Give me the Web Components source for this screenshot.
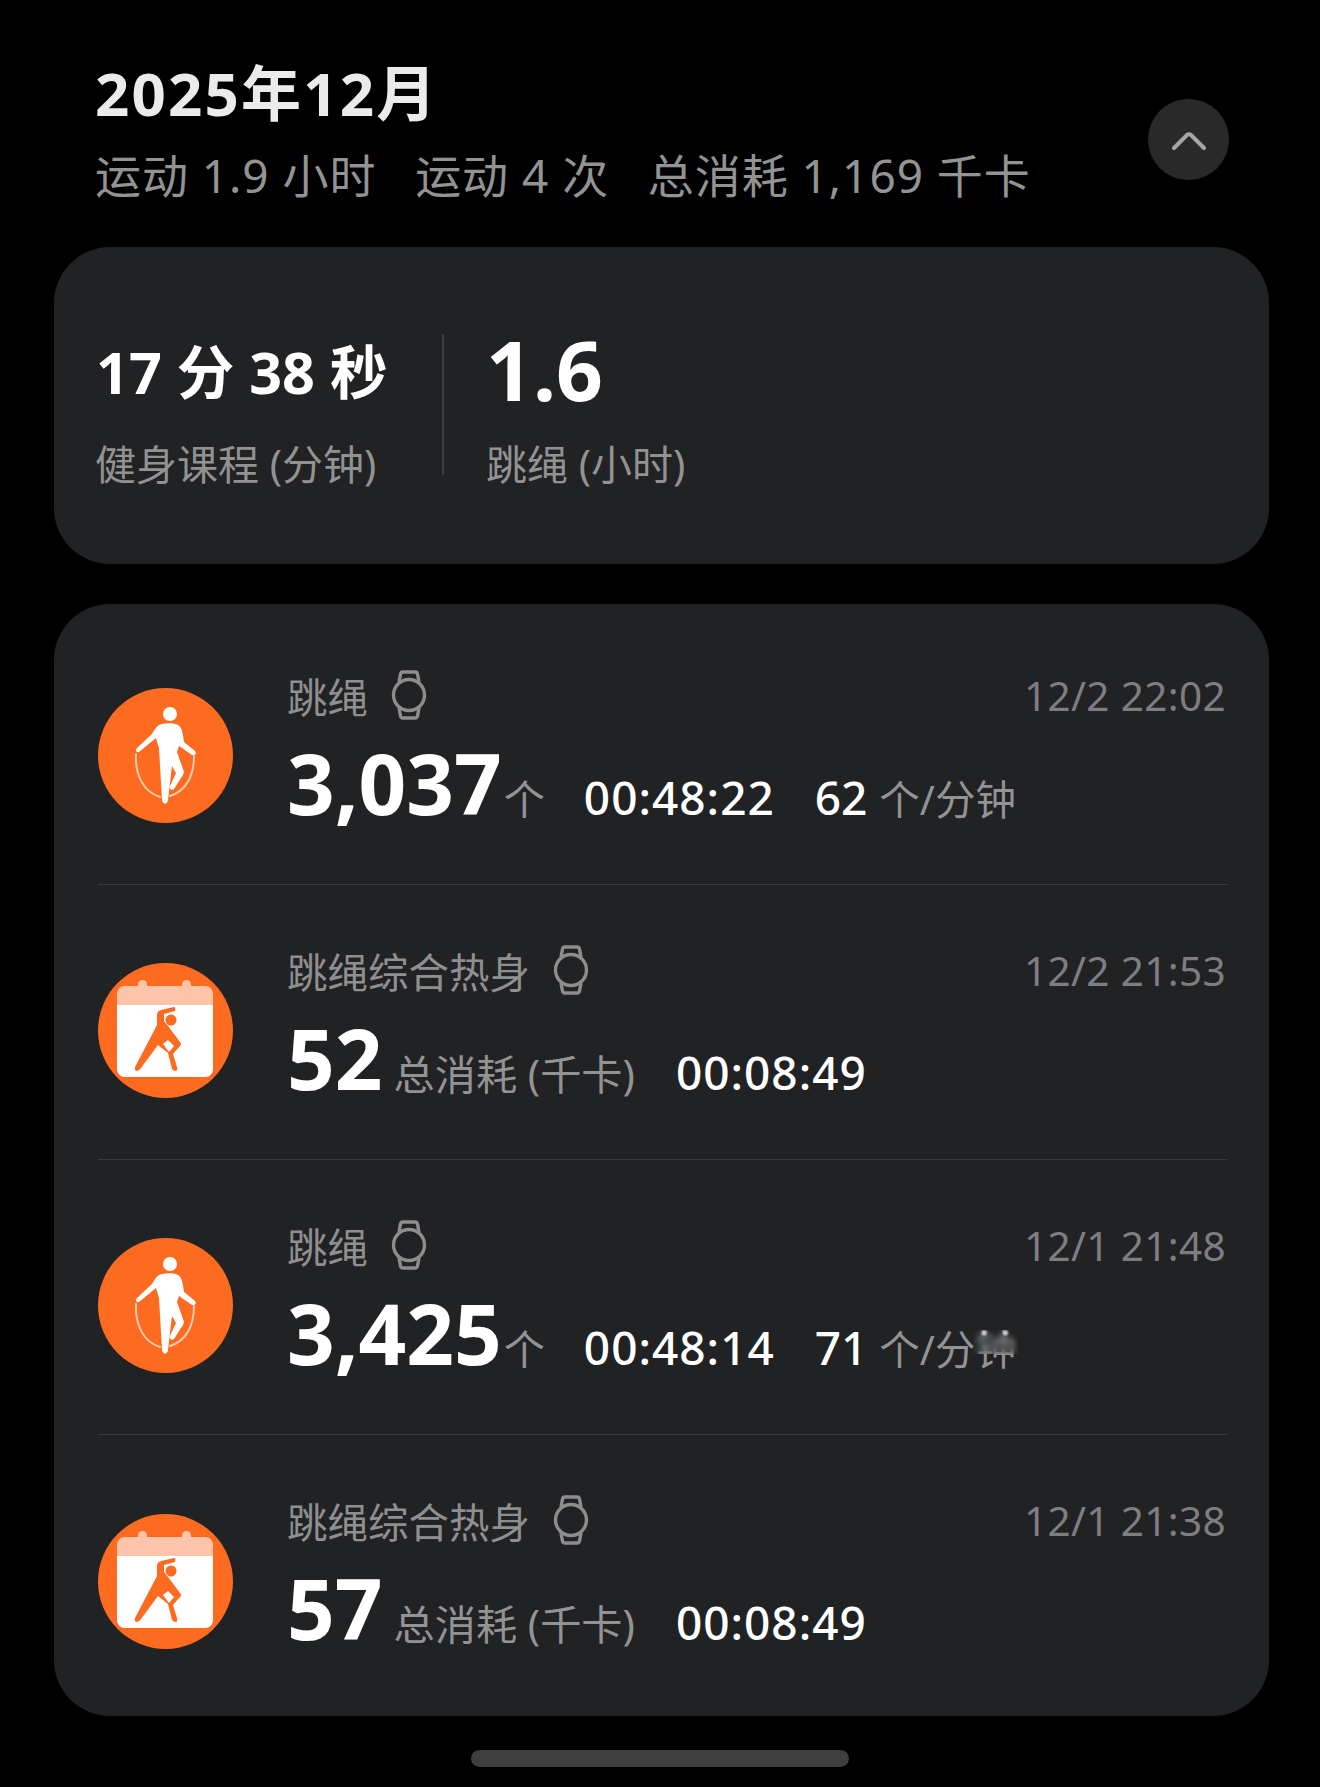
<!DOCTYPE html>
<html lang="zh">
<head>
<meta charset="utf-8">
<title>运动记录</title>
<style>
  html, body { margin: 0; background: #000; }
  body { font-family: "Noto Sans", "Noto Sans CJK SC", sans-serif; color: #fff; width: 1320px; height: 1787px; overflow: hidden; }
</style>
</head>
<body>
<template id="rope-tpl">
  <style>:host { display: block; width: 135px; height: 135px; } svg { display: block; }</style>
  <svg viewBox="0 0 135 135" width="135" height="135">
    <circle cx="67.5" cy="67.5" r="67.5" fill="#fd6b21"/>
    <path d="M38 66C37 88 46 104 62 109M96 68C96 88 88 103 72 108" fill="none" stroke="#ffc9ad" stroke-width="2" stroke-linecap="round"/>
    <circle cx="72" cy="26" r="7" fill="#fff"/>
    <path d="M64 36C70 35 76 35 80 37C84 39 85 46 86 54L97 63C99 65 97 68 94 67L81 58L79 64L85 81C87 85 85 87 83 90L76 101C74 103 71 101 72 98L78 85L74 78L70 112C69 117 65 117 64 112L61 60L58 50L41 64C38 65 37 62 39 60L54 46C57 41 59 37 64 36Z" fill="#fff"/>
  </svg>
</template>
<template id="plan-tpl">
  <style>:host { display: block; width: 135px; height: 135px; } svg { display: block; }</style>
  <svg viewBox="0 0 135 135" width="135" height="135">
    <circle cx="67.5" cy="67.5" r="67.5" fill="#fd6b21"/>
    <rect x="40" y="17" width="9" height="14" rx="4.5" fill="#ffc4a9"/>
    <rect x="84" y="17" width="9" height="14" rx="4.5" fill="#ffc4a9"/>
    <path d="M19 42V31C19 26.5 22.500 23 27 23H107C111.500 23 115 26.500 115 31V42Z" fill="#ffc4a9"/>
    <path d="M19 42H115V106C115 110.500 111.500 114 107 114H27C22.500 114 19 110.500 19 106Z" fill="#fff"/>
    <circle cx="73" cy="57" r="5.500" fill="#fd6b21"/>
    <path d="M76 44L63 47Q59 48 59 52L59 62L37 104Q36 108 39 108Q41 108 43 105L60 82L70 90L74 106Q75 108 78 108Q80 107 79 104L75 91L82 83Q84 81 82 79L70 63L66 58L66 51L77 48Q78 44 76 44Z" fill="#fd6b21"/>
    <path d="M65 81L70 77L76 83L71 89Z" fill="#fff"/>
  </svg>
</template>
<template id="watch-tpl">
  <style>:host { display: inline-block; width: 36px; height: 52px; flex: none; } svg { display: block; }</style>
  <svg viewBox="0 0 36 52" width="36" height="52" fill="none" stroke="#8d8d8e" stroke-width="3.400" stroke-linejoin="round">
    <circle cx="18" cy="26" r="15.500"/>
    <path d="M8 13L9.500 5C9.800 3.500 10.500 3 12 3H24C25.500 3 26.200 3.500 26.500 5L28 13"/>
    <path d="M8 39L9.500 47C9.800 48.500 10.500 49 12 49H24C25.500 49 26.200 48.500 26.500 47L28 39"/>
  </svg>
</template>

<template id="header-tpl">
  <style>
    :host { display: flex; justify-content: space-between; align-items: flex-start; padding: 48px 91px 0 95px; height: 247px; box-sizing: border-box; }
    h1 { margin: 0; font-size: 60px; font-weight: 700; line-height: 90px; color: #ebebeb; letter-spacing: 2.2px; }
    p { margin: 5px 0 0; font-size: 46px; line-height: 64px; color: #939393; letter-spacing: .95px; white-space: pre; }
    button { width: 81px; height: 81px; margin-top: 51px; border: 0; padding: 0; border-radius: 50%; background: #292929; display: flex; align-items: center; justify-content: center; }
  </style>
  <div>
    <h1><slot name="title"></slot></h1>
    <p><slot name="sub"></slot></p>
  </div>
  <button aria-label="收起">
    <svg width="34" height="20" viewBox="0 0 34 20" fill="none" stroke="#a6a6a6" stroke-width="4" stroke-linecap="round" stroke-linejoin="round"><path d="M2 18L15 5C16 4 18 4 19 5L32 18"/></svg>
  </button>
</template>

<template id="card-tpl">
  <style>
    :host { display: block; margin: 0 51px 40px 54px; background: #202224; border-radius: 56px; overflow: hidden; }
  </style>
  <slot></slot>
</template>

<template id="summary-tpl">
  <style>
    :host { display: flex; height: 317px; box-sizing: border-box; padding: 87px 0 0 42px; align-items: flex-start; }
    .cell { display: flex; flex-direction: column; }
    .first { width: 346px; border-right: 2px solid #3d3e40; height: 141px; margin-right: 42px; }
    .val { flex: none; height: 70px; display: flex; align-items: center; color: #fff; font-weight: 700; white-space: pre; }
    .s { font-size: 57.5px; }
    .b { font-size: 82px; }
    .lab { flex: none; margin-top: 24px; font-size: 41px; line-height: 72px; color: #929293; white-space: pre; }
    .first .lab { margin-left: -1px; }
  </style>
  <div class="cell first">
    <div class="val s"><slot name="a"></slot></div>
    <div class="lab"><slot name="a-label"></slot></div>
  </div>
  <div class="cell">
    <div class="val b"><slot name="b"></slot></div>
    <div class="lab"><slot name="b-label"></slot></div>
  </div>
</template>

<template id="row-tpl">
  <style>
    :host { display: flex; height: 275px; box-sizing: border-box; margin: 0 42px 0 44px; padding-top: 17px; align-items: center; gap: 54px; border-bottom: 1px solid #3a3b3d; }
    :host([last]) { border-bottom: 0; }
    .body { flex: 1; align-self: flex-start; padding-top: 40px; }
    .top { display: flex; align-items: center; height: 56px; font-size: 40.5px; color: #8f8f90; }
    .top .name { margin-right: 23px; white-space: pre; }
    .top .time { margin-left: auto; padding-right: 1px; color: #7e7e80; letter-spacing: .35px; }
    .main { display: flex; align-items: baseline; height: 100px; margin-top: 10px; }
  </style>
  <slot name="icon"></slot>
  <div class="body">
    <div class="top">
      <span class="name"><slot name="name"></slot></span>
      <watch-icon></watch-icon>
      <span class="time"><slot name="time"></slot></span>
    </div>
    <div class="main"><slot></slot></div>
  </div>
</template>

<template id="num-tpl">
  <style>
    :host { display: inline-block; font-size: 83.5px; font-weight: 700; color: #fff; line-height: 100px; }
  </style>
  <slot></slot>
</template>
<template id="stat-tpl">
  <style>
    :host { display: inline-block; font-size: 46px; font-weight: 500; color: #fff; line-height: 100px; white-space: nowrap; letter-spacing: 1px; }
    ::slotted(i) { font-style: normal; font-weight: 400; font-size: 41.2px; letter-spacing: 0; color: #939394; }
  </style>
  <slot></slot>
</template>
<template id="bar-tpl">
  <style>
    :host { display: block; width: 378px; height: 17px; border-radius: 9px; background: #3f3f3f; margin: 34px auto 0 471px; }
  </style>
</template>

<workout-header>
  <span slot="title">2025年12月</span>
  <span slot="sub">运动 1.9 小时   运动 4 次   总消耗 1,169 千卡</span>
</workout-header>

<panel-card>
  <month-summary>
    <span slot="a">17 分 38 秒</span>
    <span slot="a-label">健身课程 (分钟)</span>
    <span slot="b">1.6</span>
    <span slot="b-label">跳绳 (小时)</span>
  </month-summary>
</panel-card>

<panel-card style="padding: 6px 0; margin-bottom: 0">
  <workout-row>
    <rope-icon slot="icon"></rope-icon>
    <span slot="name">跳绳</span>
    <span slot="time">12/2 22:02</span>
    <big-num>3,037</big-num>
    <stat-text style="margin-left:2px;width:70px"><i>个</i></stat-text>
    <stat-text style="margin-left:10px">00:48:22</stat-text>
    <stat-text style="margin-left:40px;letter-spacing:0">62 <i style="font-size:40.5px">个/分钟</i></stat-text>
  </workout-row>
  <workout-row>
    <plan-icon slot="icon"></plan-icon>
    <span slot="name">跳绳综合热身</span>
    <span slot="time">12/2 21:53</span>
    <big-num>52</big-num>
    <stat-text style="margin-left:11px"><i>总消耗 (千卡)</i></stat-text>
    <stat-text style="margin-left:41px">00:08:49</stat-text>
  </workout-row>
  <workout-row>
    <rope-icon slot="icon"></rope-icon>
    <span slot="name">跳绳</span>
    <span slot="time">12/1 21:48</span>
    <big-num>3,425</big-num>
    <stat-text style="margin-left:2px;width:70px"><i>个</i></stat-text>
    <stat-text style="margin-left:10px">00:48:14</stat-text>
    <!-- the smudge sits over the top of the last glyph, same as the reference -->
    <stat-text style="margin-left:40px;letter-spacing:0">71 <i style="font-size:40.5px">个/分<span style="position:relative;display:inline-block">钟<b style="position:absolute;left:-2px;right:-2px;top:30px;height:24px;backdrop-filter:blur(3px);background:radial-gradient(circle at 25% 12%,#c9c9c9 0 1px,transparent 4px),radial-gradient(circle at 72% 12%,#c9c9c9 0 1px,transparent 4px)"></b></span></i></stat-text>
  </workout-row>
  <workout-row last>
    <plan-icon slot="icon"></plan-icon>
    <span slot="name">跳绳综合热身</span>
    <span slot="time">12/1 21:38</span>
    <big-num>57</big-num>
    <stat-text style="margin-left:11px"><i>总消耗 (千卡)</i></stat-text>
    <stat-text style="margin-left:41px">00:08:49</stat-text>
  </workout-row>
</panel-card>
<home-bar></home-bar>

<script>
  // all of these only stamp a template, so one helper is enough
  function define(tag, tplId) {
    customElements.define(tag, class extends HTMLElement {
      constructor() {
        super();
        this.attachShadow({ mode: 'open' });
        this.shadowRoot.appendChild(document.getElementById(tplId).content.cloneNode(true));
      }
    });
  }
  define('rope-icon', 'rope-tpl');
  define('plan-icon', 'plan-tpl');
  define('watch-icon', 'watch-tpl');
  define('workout-header', 'header-tpl');
  define('panel-card', 'card-tpl');
  define('month-summary', 'summary-tpl');
  define('workout-row', 'row-tpl');
  define('big-num', 'num-tpl');
  define('stat-text', 'stat-tpl');
  define('home-bar', 'bar-tpl');
</script>
</body>
</html>
